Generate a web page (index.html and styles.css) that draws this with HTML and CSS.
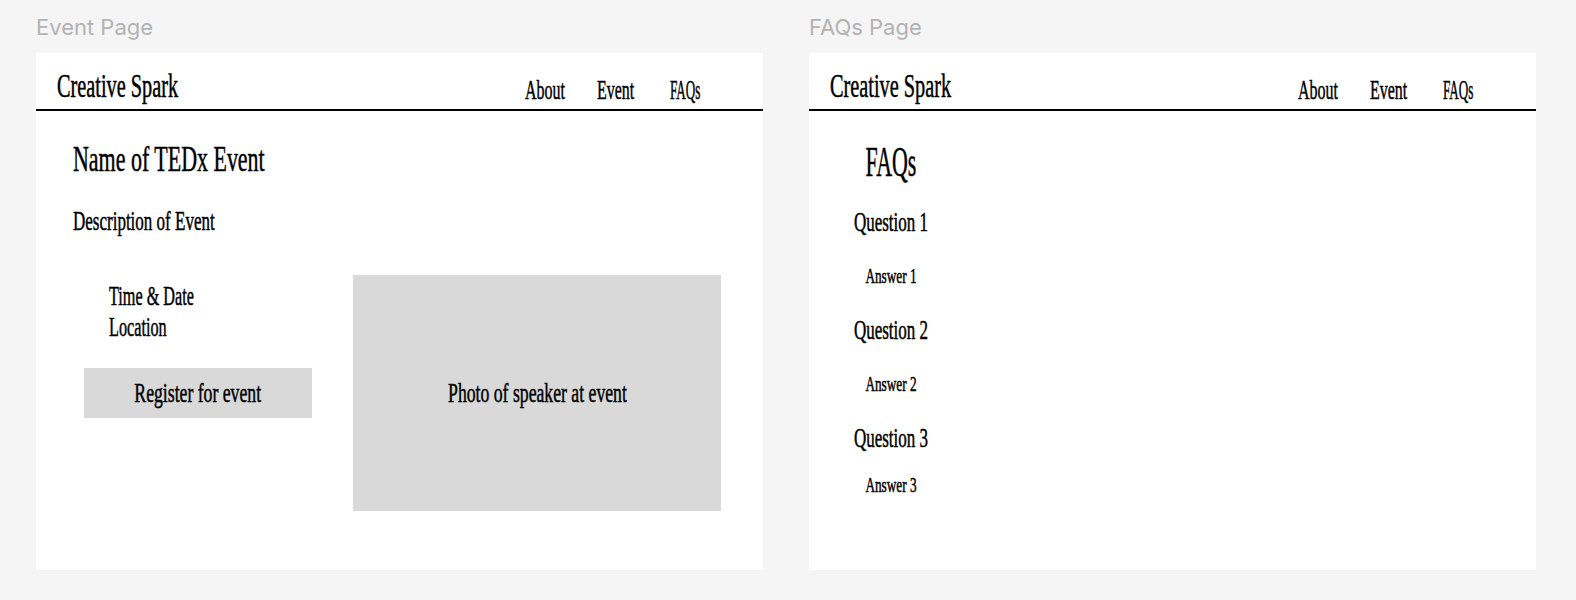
FILE: index.html
```html
<!DOCTYPE html>
<html lang="en">
<head>
<meta charset="utf-8">
<title>Creative Spark wireframes</title>
<link rel="stylesheet" href="styles.css">
</head>
<body>
<div class="board">
  <section class="artboard">
    <div class="label">Event Page</div>
    <div class="frame">
      <header class="site-header">
        <div class="logo cond">Creative Spark</div>
        <nav class="nav">
          <a class="nav-link cond">About</a>
          <a class="nav-link cond">Event</a>
          <a class="nav-link cond">FAQs</a>
        </nav>
      </header>
      <main class="event">
        <h1 class="event-title cond">Name of TEDx Event</h1>
        <p class="event-desc cond">Description of Event</p>
        <div class="event-row">
          <div class="event-info">
            <div class="info-lines">
              <p class="info-line cond">Time &amp; Date</p>
              <p class="info-line cond">Location</p>
            </div>
            <div class="register"><span class="register-text cond cond-c">Register for event</span></div>
          </div>
          <div class="photo"><span class="photo-text cond cond-c">Photo of speaker at event</span></div>
        </div>
      </main>
    </div>
  </section>

  <section class="artboard">
    <div class="label">FAQs Page</div>
    <div class="frame">
      <header class="site-header">
        <div class="logo cond">Creative Spark</div>
        <nav class="nav">
          <a class="nav-link cond">About</a>
          <a class="nav-link cond">Event</a>
          <a class="nav-link cond">FAQs</a>
        </nav>
      </header>
      <main class="faq">
        <h1 class="faq-title cond cond-c">FAQs</h1>
        <div class="faq-list">
          <div class="faq-item">
            <h3 class="faq-q cond cond-c">Question 1</h3>
            <p class="faq-a cond cond-c">Answer 1</p>
          </div>
          <div class="faq-item">
            <h3 class="faq-q cond cond-c">Question 2</h3>
            <p class="faq-a cond cond-c">Answer 2</p>
          </div>
          <div class="faq-item faq-item-tight">
            <h3 class="faq-q cond cond-c">Question 3</h3>
            <p class="faq-a cond cond-c">Answer 3</p>
          </div>
        </div>
      </main>
    </div>
  </section>
</div>
</body>
</html>
```

FILE: styles.css
```css
* { box-sizing: border-box; }

html, body {
  margin: 0;
  padding: 0;
  background: #f5f5f5;
}

body {
  font-family: "Liberation Serif", serif;
  color: #000;
}

h1, h3, p { margin: 0; font-weight: normal; }

.board {
  display: flex;
  gap: 46px;
  padding: 14px 0 0 36px;
}

.label {
  font-family: Inter, "Liberation Sans", sans-serif;
  font-size: 22px;
  line-height: 26px;
  height: 26px;
  margin-bottom: 13px;
  color: #b3b3b3;
}

.frame {
  width: 727px;
  height: 517px;
  background: #fff;
}

/* condensed look of the display serif */
.cond {
  --sx: 0.63;
  display: block;
  transform: scaleX(var(--sx));
  transform-origin: left center;
  -webkit-text-stroke: 0.5px #000;
}
.cond-c { transform-origin: center center; }

.site-header {
  display: flex;
  justify-content: space-between;
  align-items: flex-start;
  height: 58px;
  padding: 13px 21px 0 21px;
  border-bottom: 2px solid #000;
}

.logo {
  --sx: 0.615;
  font-size: 33px;
  line-height: 40px;
  white-space: nowrap;
}

.nav {
  display: flex;
  padding-top: 4px;
}

.nav-link {
  --sx: 0.57;
  width: 72.5px;
  font-size: 28px;
  line-height: 40px;
  color: #000;
  text-decoration: none;
  white-space: nowrap;
}
.nav-link:last-child { --sx: 0.47; }

/* Event page */
.event { padding-left: 37px; }

.event-title {
  --sx: 0.61;
  margin-top: 26px;
  font-size: 36px;
  line-height: 44px;
  white-space: nowrap;
}

.event-desc {
  margin-top: 23px;
  font-size: 27px;
  line-height: 34px;
  white-space: nowrap;
}

.event-row {
  display: flex;
  gap: 41px;
  margin-top: 37px;
  margin-left: 11px;
}

.event-info {
  width: 228px;
  display: flex;
  flex-direction: column;
}

.info-lines {
  padding: 6px 0 0 25px;
}

.info-line {
  --sx: 0.6;
  font-size: 27px;
  line-height: 31px;
  white-space: nowrap;
}

.register {
  margin-top: 25px;
  height: 50px;
  background: #d9d9d9;
  display: flex;
  justify-content: center;
  align-items: center;
}

.register-text {
  --sx: 0.655;
  font-size: 27px;
  line-height: 50px;
  white-space: nowrap;
}

.photo {
  width: 368px;
  height: 236px;
  background: #d9d9d9;
  display: flex;
  justify-content: center;
  align-items: center;
}

.photo-text {
  --sx: 0.655;
  font-size: 27px;
  line-height: 34px;
  white-space: nowrap;
}

/* FAQ page */
.faq {
  width: 140px;
  margin-left: 12px;
  text-align: center;
}

.faq-title {
  --sx: 0.51;
  margin-top: 26px;
  font-size: 43px;
  line-height: 50px;
}

.faq-list {
  display: flex;
  flex-direction: column;
  gap: 23px;
  margin-top: 18px;
}

.faq-item {
  display: flex;
  flex-direction: column;
  gap: 23px;
}
.faq-item-tight { gap: 16px; }

.faq-q {
  font-size: 27px;
  line-height: 34px;
  white-space: nowrap;
}

.faq-a {
  font-size: 21px;
  line-height: 28px;
  white-space: nowrap;
}
```
